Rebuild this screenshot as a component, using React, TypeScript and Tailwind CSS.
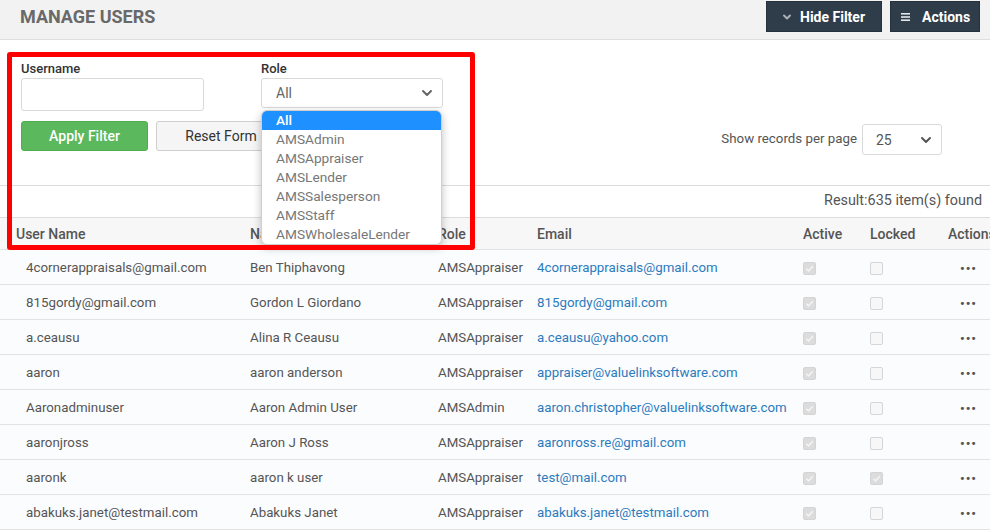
import React from 'react';
import { ChevronDown } from 'lucide-react';

type UserRow = {
  username: string;
  name: string;
  role: string;
  email: string;
  locked?: boolean;
};

const users: UserRow[] = [
  { username: '4cornerappraisals@gmail.com', name: 'Ben Thiphavong', role: 'AMSAppraiser', email: '4cornerappraisals@gmail.com' },
  { username: '815gordy@gmail.com', name: 'Gordon L Giordano', role: 'AMSAppraiser', email: '815gordy@gmail.com' },
  { username: 'a.ceausu', name: 'Alina R Ceausu', role: 'AMSAppraiser', email: 'a.ceausu@yahoo.com' },
  { username: 'aaron', name: 'aaron anderson', role: 'AMSAppraiser', email: 'appraiser@valuelinksoftware.com' },
  { username: 'Aaronadminuser', name: 'Aaron Admin User', role: 'AMSAdmin', email: 'aaron.christopher@valuelinksoftware.com' },
  { username: 'aaronjross', name: 'Aaron J Ross', role: 'AMSAppraiser', email: 'aaronross.re@gmail.com' },
  { username: 'aaronk', name: 'aaron k user', role: 'AMSAppraiser', email: 'test@mail.com', locked: true },
  { username: 'abakuks.janet@testmail.com', name: 'Abakuks Janet', role: 'AMSAppraiser', email: 'abakuks.janet@testmail.com' },
];

const roles = ['All', 'AMSAdmin', 'AMSAppraiser', 'AMSLender', 'AMSSalesperson', 'AMSStaff', 'AMSWholesaleLender'];

const cols = 'grid grid-cols-[234px_188px_99px_266px_67px_78px_1fr] pl-4';

const Check = ({ checked }: { checked?: boolean }) => (
  <span
    className={
      'flex h-[13px] w-[13px] items-center justify-center rounded-[2px] border ' +
      (checked ? 'border-[#d4d4d4] bg-[#dcdcdc]' : 'border-[#d6d6d6] bg-[#f7f7f7]')
    }
  >
    {checked && (
      <svg width="9" height="9" viewBox="0 0 10 10" fill="none">
        <path d="M1.5 5.2 4 7.6 8.6 2.4" stroke="#f4f4f4" strokeWidth="1.6" />
      </svg>
    )}
  </span>
);

export default function App() {
  return (
    <div className="relative h-[530px] w-[990px] overflow-hidden bg-white font-['Roboto',sans-serif] text-sm text-[#555]">
      {/* title bar */}
      <div className="flex h-10 items-start justify-between border-b border-[#dedede] bg-[#f2f2f2] pl-5 pr-[10px]">
        <h1 className="mt-[6px] text-[18px] leading-[22px] font-bold text-[#696969]">MANAGE USERS</h1>
        <div className="mt-px flex gap-2">
          <button className="flex h-[31px] w-[116px] items-center gap-[7px] border border-[#25313c] bg-[#2f3d4b] pl-[14px] font-bold text-white">
            <ChevronDown className="h-[12px] w-[12px] text-[#a9b0b7]" strokeWidth={4} />
            Hide Filter
          </button>
          <button className="flex h-[31px] w-[90px] items-center gap-[12px] border border-[#25313c] bg-[#2f3d4b] pl-[10px] font-bold text-white">
            <svg width="9" height="8" viewBox="0 0 9 8">
              <rect y="0" width="9" height="1.6" fill="#e3e7ea" />
              <rect y="3.2" width="9" height="1.6" fill="#e3e7ea" />
              <rect y="6.4" width="9" height="1.6" fill="#e3e7ea" />
            </svg>
            Actions
          </button>
        </div>
      </div>

      {/* filter */}
      <div className="border-b border-[#dcdcdc] pb-[30px] pl-[21px] pr-12 pt-[21px]">
        <div className="flex gap-[57px]">
          <div className="flex flex-col gap-px">
            <label className="h-4 leading-4 text-[13px] font-medium text-[#333]">Username</label>
            <input className="h-[33px] w-[183px] rounded-[3px] border border-[#d9d9d9] bg-white" />
          </div>
          <div className="flex flex-col gap-px">
            <label className="h-4 leading-4 text-[13px] font-medium text-[#333]">Role</label>
            <div className="flex h-[30px] w-[182px] items-center justify-between rounded-[3px] border border-[#d9d9d9] bg-white pl-[14px] pr-[7px] text-[#666]">
              All
              <ChevronDown className="h-4 w-4 text-[#666]" strokeWidth={3} />
            </div>
          </div>
        </div>
        <div className="mt-[10px] flex items-start justify-between">
          <div className="flex gap-2">
            <button className="h-[30px] w-[127px] rounded-[3px] border border-[#4cae4c] bg-[#5cb85c] font-medium text-white">
              Apply Filter
            </button>
            <button className="h-[30px] w-[130px] rounded-[3px] border border-[#cfcfcf] bg-[#f5f5f5] text-[#333]">
              Reset Form
            </button>
          </div>
          <div className="mt-[3px] flex items-center gap-[5px]">
            <span className="text-[13.3px] text-[#555]">Show records per page</span>
            <div className="flex h-[31px] w-[80px] items-center justify-between rounded-[3px] border border-[#dadada] bg-white pl-[13px] pr-[7px] text-[#555]">
              25
              <ChevronDown className="h-4 w-4 text-[#555]" strokeWidth={3} />
            </div>
          </div>
        </div>
      </div>

      {/* result */}
      <div className="flex h-8 items-center justify-end border-b border-[#dcdcdc] pr-2 text-[14.4px] text-[#555]">
        Result:635 item(s) found
      </div>

      {/* table */}
      <div className={cols + ' h-8 items-center border-b border-[#e3e3e3] bg-[#f7f7f7] font-medium text-[#555]'}>
        <span>User Name</span>
        <span>Name</span>
        <span>Role</span>
        <span>Email</span>
        <span>Active</span>
        <span>Locked</span>
        <span className="whitespace-nowrap">Actions</span>
      </div>
      {users.map((u) => (
        <div key={u.username} className={cols + ' h-[35px] items-center border-b border-[#e3e3e3] bg-[#fbfcfe] pt-[2px] text-[13.3px] text-[#555]'}>
          <span className="pl-[10px]">{u.username}</span>
          <span>{u.name}</span>
          <span>{u.role}</span>
          <span className="text-[#2b7bbd]">{u.email}</span>
          <span><Check checked /></span>
          <span><Check checked={u.locked} /></span>
          <span className="pl-[12px] text-[13px] font-bold tracking-[1px] text-[#555] leading-none">•••</span>
        </div>
      ))}

      {/* open role dropdown */}
      <div className="absolute left-[261px] top-[110px] w-[181px] overflow-hidden rounded-[6px] border border-[#cfcfcf] bg-white shadow-[0_3px_8px_rgba(0,0,0,0.25)]">
        {roles.map((r, i) => (
          <div
            key={r}
            className={
              'h-[19px] pl-[14px] text-[13.7px] leading-[19px] ' +
              (i === 0 ? 'bg-[#1e90ff] font-medium text-white' : 'text-[#777]')
            }
          >
            {r}
          </div>
        ))}
      </div>

      {/* highlight box */}
      <div className="pointer-events-none absolute left-[7px] top-[52px] h-[198px] w-[468px] rounded-[3px] border-[5px] border-[#ff0000]" />
    </div>
  );
}
